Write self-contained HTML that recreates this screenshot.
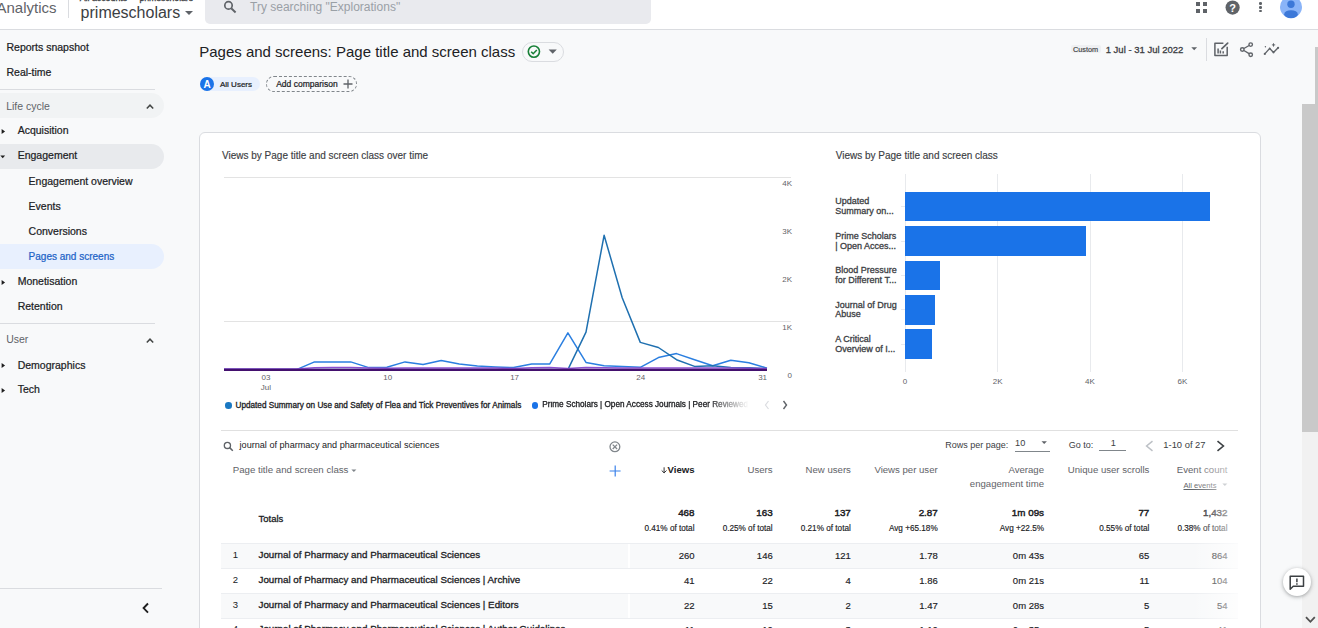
<!DOCTYPE html>
<html><head><meta charset="utf-8"><style>
html,body{margin:0;padding:0;width:1318px;height:628px;overflow:hidden;background:#f8f9fa;position:relative;font-family:"Liberation Sans", sans-serif;}
.t{position:absolute;line-height:1;white-space:nowrap;}
.r{position:absolute;box-sizing:border-box;}
.nav{-webkit-text-stroke-width:0.22px;}
.med{-webkit-text-stroke-width:0.3px;}
.lt{-webkit-text-stroke-width:0.15px;}
.sb{-webkit-text-stroke-width:0.45px;}
svg.r{overflow:visible;}
</style></head><body>
<div class="r" style="left:0.00px;top:0.00px;width:1318.00px;height:29.00px;background:#ffffff;"></div>
<div class="r" style="left:0.00px;top:29.00px;width:1318.00px;height:1.00px;background:#dadce0;"></div>
<div class="t" style="top:0.00px;font-size:15px;color:#5f6368;left:-3.50px;">Analytics</div>
<div class="r" style="left:68.00px;top:0.00px;width:1.00px;height:17.50px;background:#dadce0;"></div>
<div class="t med" style="top:-5.95px;font-size:8.8px;color:#3c4043;left:79.70px;">All accounts</div>
<div class="t med" style="top:-5.78px;font-size:8.6px;color:#3c4043;left:139.50px;">primescholars</div>
<div class="t" style="top:4.56px;font-size:16px;color:#3c4043;left:80.60px;">primescholars</div>
<svg class="r" style="left:184px;top:10px" width="10" height="6"><path d="M1 1h8l-4 4z" fill="#5f6368"/></svg>
<div class="r" style="left:205.00px;top:-8.00px;width:446.00px;height:31.70px;background:#e9eaee;border-radius:5px;"></div>
<svg class="r" style="left:222px;top:0px" width="16" height="14" viewBox="0 0 16 14"><circle cx="6.5" cy="5.4" r="3.7" fill="none" stroke="#5f6368" stroke-width="1.7"/><path d="M9.2 8.2l4.4 4.3" stroke="#5f6368" stroke-width="1.9"/></svg>
<div class="t" style="top:0.94px;font-size:12px;color:#9aa0a6;left:250.00px;">Try searching &quot;Explorations&quot;</div>
<div class="r" style="left:1196.00px;top:2.20px;width:4.20px;height:4.20px;background:#5f6368;"></div>
<div class="r" style="left:1196.00px;top:9.20px;width:4.20px;height:4.20px;background:#5f6368;"></div>
<div class="r" style="left:1202.80px;top:2.20px;width:4.20px;height:4.20px;background:#5f6368;"></div>
<div class="r" style="left:1202.80px;top:9.20px;width:4.20px;height:4.20px;background:#5f6368;"></div>
<svg class="r" style="left:1225px;top:0px" width="16" height="16" viewBox="0 0 16 16"><circle cx="7.6" cy="7.6" r="7.1" fill="#5f6368"/><text x="7.6" y="11.8" font-size="11" font-weight="bold" fill="#fff" text-anchor="middle" font-family="Liberation Sans">?</text></svg>
<div class="r" style="left:1259.3px;top:2.40px;width:2.6px;height:2.6px;border-radius:50%;background:#5f6368"></div>
<div class="r" style="left:1259.3px;top:6.00px;width:2.6px;height:2.6px;border-radius:50%;background:#5f6368"></div>
<div class="r" style="left:1259.3px;top:9.70px;width:2.6px;height:2.6px;border-radius:50%;background:#5f6368"></div>
<svg class="r" style="left:1280px;top:-4px" width="22" height="22" viewBox="0 0 22 22"><circle cx="11" cy="11" r="11" fill="#8ab4f8"/><circle cx="11" cy="8.3" r="3.7" fill="#3c78d8"/><ellipse cx="11" cy="18.2" rx="6.8" ry="4" fill="#3c78d8"/></svg>
<div class="r" style="left:0.00px;top:30.00px;width:199.00px;height:598.00px;background:#f8f9fa;"></div>
<div class="t nav" style="top:42.41px;font-size:10.5px;color:#202124;left:6.50px;">Reports snapshot</div>
<div class="t nav" style="top:67.21px;font-size:10.5px;color:#202124;left:6.50px;">Real-time</div>
<div class="r" style="left:0.00px;top:89.00px;width:155.00px;height:1.00px;background:#dadce0;"></div>
<div class="r" style="left:-20.00px;top:93.00px;width:184.00px;height:25.00px;background:#f1f3f4;border-radius:0 12.5px 12.5px 0;"></div>
<div class="t" style="top:100.51px;font-size:10.5px;color:#5f6368;left:6.20px;">Life cycle</div>
<svg class="r" style="left:144.5px;top:102.7px" width="10" height="7" viewBox="0 0 10 7"><path d="M1.8 5.5L5 2.2l3.2 3.3" fill="none" stroke="#444746" stroke-width="1.5"/></svg>
<svg class="r" style="left:0.5px;top:128.3px" width="6" height="7" viewBox="0 0 6 7"><path d="M0.6 0.9v5.2l3.5-2.6z" fill="#1f1f1f"/></svg>
<div class="t nav" style="top:125.41px;font-size:10.5px;color:#202124;left:17.70px;">Acquisition</div>
<div class="r" style="left:-20.00px;top:144.00px;width:184.00px;height:25.00px;background:#e8eaed;border-radius:0 12.5px 12.5px 0;"></div>
<svg class="r" style="left:-0.6px;top:154.6px" width="8" height="5" viewBox="0 0 8 5"><path d="M1.3 0.6h4.8l-2.4 2.7z" fill="#1f1f1f"/></svg>
<div class="t nav" style="top:150.31px;font-size:10.5px;color:#202124;left:17.70px;">Engagement</div>
<div class="t nav" style="top:175.71px;font-size:10.5px;color:#202124;left:28.60px;">Engagement overview</div>
<div class="t nav" style="top:200.61px;font-size:10.5px;color:#202124;left:28.60px;">Events</div>
<div class="t nav" style="top:226.41px;font-size:10.5px;color:#202124;left:28.60px;">Conversions</div>
<div class="r" style="left:-20.00px;top:244.00px;width:184.00px;height:25.00px;background:#e8f0fe;border-radius:0 12.5px 12.5px 0;"></div>
<div class="t nav" style="top:251.53px;font-size:10px;color:#1b62c6;left:28.60px;">Pages and screens</div>
<svg class="r" style="left:0.5px;top:279.2px" width="6" height="7" viewBox="0 0 6 7"><path d="M0.6 0.9v5.2l3.5-2.6z" fill="#1f1f1f"/></svg>
<div class="t nav" style="top:276.31px;font-size:10.5px;color:#202124;left:17.70px;">Monetisation</div>
<div class="t nav" style="top:301.41px;font-size:10.5px;color:#202124;left:17.70px;">Retention</div>
<div class="r" style="left:0.00px;top:323.00px;width:155.00px;height:1.00px;background:#dadce0;"></div>
<div class="t" style="top:334.31px;font-size:10.5px;color:#5f6368;left:6.20px;">User</div>
<svg class="r" style="left:144.5px;top:336.5px" width="10" height="7" viewBox="0 0 10 7"><path d="M1.8 5.5L5 2.2l3.2 3.3" fill="none" stroke="#444746" stroke-width="1.5"/></svg>
<svg class="r" style="left:0.5px;top:362.4px" width="6" height="7" viewBox="0 0 6 7"><path d="M0.6 0.9v5.2l3.5-2.6z" fill="#1f1f1f"/></svg>
<div class="t nav" style="top:359.51px;font-size:10.5px;color:#202124;left:17.70px;">Demographics</div>
<svg class="r" style="left:0.5px;top:386.9px" width="6" height="7" viewBox="0 0 6 7"><path d="M0.6 0.9v5.2l3.5-2.6z" fill="#1f1f1f"/></svg>
<div class="t nav" style="top:384.01px;font-size:10.5px;color:#202124;left:17.70px;">Tech</div>
<div class="r" style="left:0.00px;top:588.00px;width:162.00px;height:1.00px;background:#dadce0;"></div>
<svg class="r" style="left:141px;top:601.5px" width="9" height="12" viewBox="0 0 9 12"><path d="M7 1.5L2.6 6.1 7 10.6" fill="none" stroke="#1f1f1f" stroke-width="1.9"/></svg>
<div class="r" style="left:199.00px;top:30.00px;width:1103.00px;height:598.00px;background:#f8f9fa;"></div>
<div class="t" style="top:44.30px;font-size:15px;color:#202124;left:199.20px;">Pages and screens: Page title and screen class</div>
<div class="r" style="left:522px;top:41.8px;width:41.6px;height:20px;border:1px solid #dadce0;border-radius:10px;"></div>
<svg class="r" style="left:527px;top:44.8px" width="14" height="14" viewBox="0 0 14 14"><circle cx="6.9" cy="6.6" r="5.6" fill="none" stroke="#188038" stroke-width="1.6"/><path d="M4.2 6.7l2 2 3.6-3.7" fill="none" stroke="#188038" stroke-width="1.6"/></svg>
<svg class="r" style="left:547.5px;top:49.3px" width="10" height="6" viewBox="0 0 10 6"><path d="M0.6 0.4h8.2l-4.1 4.4z" fill="#5f6368"/></svg>
<div class="r" style="left:200.00px;top:77.00px;width:60.20px;height:14.20px;background:#e8f0fe;border-radius:7.1px;"></div>
<div class="r" style="left:200px;top:77px;width:14.2px;height:14.2px;border-radius:50%;background:#1a73e8;"></div>
<div class="t" style="top:79.94px;font-size:10px;color:#ffffff;font-weight:bold;left:7.10px;width:400px;text-align:center;">A</div>
<div class="t nav" style="top:80.73px;font-size:8px;color:#202124;left:220.00px;">All Users</div>
<div class="r" style="left:266.3px;top:76px;width:91.2px;height:16px;border:1px dashed #80868b;border-radius:8px;"></div>
<div class="t nav" style="top:79.80px;font-size:8.5px;color:#202124;left:276.20px;">Add comparison</div>
<svg class="r" style="left:342.5px;top:78.8px" width="10" height="10" viewBox="0 0 10 10"><path d="M5 0.5v9M0.5 5h9" stroke="#5f6368" stroke-width="1.3"/></svg>
<div class="r" style="left:1071.30px;top:44.60px;width:29.70px;height:8.70px;background:#eff0f2;border-radius:2px;"></div>
<div class="t lt" style="top:46.32px;font-size:7.3px;color:#3c4043;left:1073.00px;">Custom</div>
<div class="t med" style="top:45.46px;font-size:9.5px;color:#3c4043;left:1105.70px;">1 Jul - 31 Jul 2022</div>
<svg class="r" style="left:1190.5px;top:47px" width="7" height="4" viewBox="0 0 7 4"><path d="M0.3 0.2h5.8l-2.9 3z" fill="#5f6368"/></svg>
<div class="r" style="left:1205.50px;top:37.60px;width:1.00px;height:23.60px;background:#dadce0;"></div>
<svg class="r" style="left:1208px;top:38px" width="76" height="22" viewBox="0 0 76 22"><path d="M15.4 5.2H6.9v12.4h12.3V8.8" fill="none" stroke="#5f6368" stroke-width="1.5" stroke-linejoin="round"/><path d="M13.9 10.6l5.8-5.5" stroke="#5f6368" stroke-width="1.7" stroke-linecap="round"/><path d="M10.1 10.4v5.1M12.4 12.4v3.1M15.2 13.3v2.2" stroke="#5f6368" stroke-width="1.5"/><circle cx="42.7" cy="6.6" r="1.75" fill="none" stroke="#5f6368" stroke-width="1.4"/><circle cx="34.3" cy="11.5" r="1.75" fill="none" stroke="#5f6368" stroke-width="1.4"/><circle cx="42.7" cy="16.7" r="1.75" fill="none" stroke="#5f6368" stroke-width="1.4"/><path d="M35.9 10.5l5.2-3M35.9 12.5l5.2 3.2" stroke="#5f6368" stroke-width="1.4"/><path d="M56.8 15.9l4.9-5.5 3.8 4 4.6-4.6" fill="none" stroke="#5f6368" stroke-width="1.4" stroke-linejoin="round"/><circle cx="56.8" cy="15.9" r="1.1" fill="#5f6368"/><circle cx="61.7" cy="10.4" r="0.9" fill="#5f6368"/><circle cx="65.5" cy="14.4" r="0.9" fill="#5f6368"/><circle cx="70.1" cy="9.8" r="1.1" fill="#5f6368"/><path d="M65.5 5.3v3.3M63.9 6.9h3.3" stroke="#5f6368" stroke-width="1"/><circle cx="57.4" cy="8.7" r="0.7" fill="#5f6368"/></svg>
<div class="r" style="left:199px;top:132px;width:1062px;height:520px;background:#fff;border:1px solid #dadce0;border-radius:6px;"></div>
<div class="t lt" style="top:150.94px;font-size:10px;color:#3c4043;left:222.00px;">Views by Page title and screen class over time</div>
<div class="r" style="left:223.80px;top:177.00px;width:567.50px;height:1.00px;background:#e3e3e3;"></div>
<div class="r" style="left:223.80px;top:321.00px;width:567.50px;height:1.00px;background:#e3e3e3;"></div>
<div class="t" style="top:179.53px;font-size:8px;color:#5f6368;right:526.00px;text-align:right;">4K</div>
<div class="t" style="top:227.53px;font-size:8px;color:#5f6368;right:526.00px;text-align:right;">3K</div>
<div class="t" style="top:275.53px;font-size:8px;color:#5f6368;right:526.00px;text-align:right;">2K</div>
<div class="t" style="top:323.53px;font-size:8px;color:#5f6368;right:526.00px;text-align:right;">1K</div>
<div class="t" style="top:372.23px;font-size:8px;color:#5f6368;right:526.00px;text-align:right;">0</div>
<div class="t" style="top:374.43px;font-size:8px;color:#5f6368;left:65.90px;width:400px;text-align:center;">03</div>
<div class="t" style="top:374.43px;font-size:8px;color:#5f6368;left:187.70px;width:400px;text-align:center;">10</div>
<div class="t" style="top:374.43px;font-size:8px;color:#5f6368;left:314.60px;width:400px;text-align:center;">17</div>
<div class="t" style="top:374.43px;font-size:8px;color:#5f6368;left:440.80px;width:400px;text-align:center;">24</div>
<div class="t" style="top:374.43px;font-size:8px;color:#5f6368;left:562.60px;width:400px;text-align:center;">31</div>
<div class="t" style="top:383.53px;font-size:8px;color:#5f6368;left:65.90px;width:400px;text-align:center;">Jul</div>
<svg class="r" style="left:0;top:0" width="1318" height="628"><polyline points="224.0,369.6 242.1,369.6 260.2,369.6 278.3,369.6 296.4,369.6 314.5,361.9 332.6,361.9 350.7,361.9 368.8,367.6 386.9,367.2 405.0,361.9 423.1,364.4 441.2,360.6 459.3,364.0 477.4,366.1 495.5,367.0 513.6,367.6 531.7,363.9 549.8,363.9 567.9,332.8 586.0,362.4 604.1,365.7 622.2,366.6 640.3,367.3 658.4,357.6 676.5,353.6 694.6,359.7 712.7,365.8 730.8,360.2 748.9,362.7 767.0,368.1" fill="none" stroke="#2b7fe0" stroke-width="1.5" stroke-linejoin="round"/><polyline points="224.0,369.6 242.1,369.6 260.2,369.6 278.3,369.6 296.4,369.6 314.5,369.6 332.6,369.6 350.7,369.6 368.8,369.6 386.9,369.6 405.0,369.6 423.1,369.6 441.2,369.6 459.3,369.6 477.4,369.6 495.5,369.6 513.6,369.6 531.7,369.6 549.8,369.6 567.9,369.6 586.0,332.2 604.1,235.3 622.2,297.7 640.3,342.4 658.4,347.5 676.5,359.7 694.6,366.4 712.7,365.8 730.8,367.6 748.9,367.8 767.0,368.6" fill="none" stroke="#1f70b0" stroke-width="1.5" stroke-linejoin="round"/><polyline points="224.0,369.0 242.1,369.0 260.2,369.0 278.3,369.0 296.4,369.0 314.5,367.8 332.6,367.5 350.7,367.5 368.8,368.0 386.9,368.3 405.0,368.0 423.1,368.0 441.2,368.0 459.3,368.0 477.4,368.0 495.5,368.0 513.6,368.5 531.7,367.8 549.8,367.5 567.9,368.6 586.0,367.5 604.1,367.8 622.2,368.0 640.3,368.0 658.4,368.0 676.5,368.0 694.6,368.0 712.7,368.0 730.8,368.0 748.9,368.3 767.0,368.5" fill="none" stroke="#8a4fd0" stroke-width="1.5"/><polyline points="224.0,369.9 242.1,369.9 260.2,369.9 278.3,369.9 296.4,369.9 314.5,369.9 332.6,369.9 350.7,369.9 368.8,369.9 386.9,369.9 405.0,369.9 423.1,369.9 441.2,369.9 459.3,369.9 477.4,369.9 495.5,369.9 513.6,369.9 531.7,369.9 549.8,369.9 567.9,369.9 586.0,369.9 604.1,369.9 622.2,369.9 640.3,369.9 658.4,369.9 676.5,369.9 694.6,369.9 712.7,369.9 730.8,369.9 748.9,369.9 767.0,369.9" fill="none" stroke="#43106e" stroke-width="2.1"/></svg>
<div class="r" style="left:225px;top:402.3px;width:6.6px;height:6.6px;border-radius:50%;background:#1a78c2;"></div>
<div class="t med" style="top:401.86px;font-size:8.2px;color:#202124;left:235.50px;">Updated Summary on Use and Safety of Flea and Tick Preventives for Animals</div>
<div class="r" style="left:531.9px;top:402.3px;width:6.6px;height:6.6px;border-radius:50%;background:#1a73e8;"></div>
<div class="t" style="left:542.3px;top:401.36px;font-size:8.2px;color:#202124;width:207px;-webkit-text-stroke-width:0.3px;overflow:hidden;-webkit-mask-image:linear-gradient(90deg,#000 80%,transparent);">Prime Scholars | Open Access Journals | Peer Reviewed</div>
<svg class="r" style="left:764px;top:400px" width="24" height="10" viewBox="0 0 24 10"><path d="M4.5 1L1.5 5l3 4" fill="none" stroke="#dadce0" stroke-width="1.2"/><path d="M19.5 1l3 4-3 4" fill="none" stroke="#5f6368" stroke-width="1.4"/></svg>
<div class="t lt" style="top:150.63px;font-size:10px;color:#3c4043;left:835.70px;">Views by Page title and screen class</div>
<div class="r" style="left:904.50px;top:174.00px;width:1.00px;height:198.00px;background:#e8eaed;"></div>
<div class="r" style="left:997.10px;top:174.00px;width:1.00px;height:198.00px;background:#e8eaed;"></div>
<div class="r" style="left:1089.50px;top:174.00px;width:1.00px;height:198.00px;background:#e8eaed;"></div>
<div class="r" style="left:1182.00px;top:174.00px;width:1.00px;height:198.00px;background:#e8eaed;"></div>
<div class="t" style="top:377.93px;font-size:8px;color:#5f6368;left:705.00px;width:400px;text-align:center;">0</div>
<div class="t" style="top:377.93px;font-size:8px;color:#5f6368;left:797.60px;width:400px;text-align:center;">2K</div>
<div class="t" style="top:377.93px;font-size:8px;color:#5f6368;left:890.00px;width:400px;text-align:center;">4K</div>
<div class="t" style="top:377.93px;font-size:8px;color:#5f6368;left:982.50px;width:400px;text-align:center;">6K</div>
<div class="r" style="left:905.00px;top:191.70px;width:304.90px;height:29.70px;background:#1a73e8;"></div>
<div class="r" style="left:901.30px;top:206.20px;width:3.50px;height:1.00px;background:#e8eaed;"></div>
<div class="t med" style="top:197.38px;font-size:9px;color:#3c4043;left:835.20px;">Updated</div>
<div class="t med" style="top:207.28px;font-size:9px;color:#3c4043;left:835.20px;">Summary on...</div>
<div class="r" style="left:905.00px;top:226.10px;width:180.70px;height:29.70px;background:#1a73e8;"></div>
<div class="r" style="left:901.30px;top:240.60px;width:3.50px;height:1.00px;background:#e8eaed;"></div>
<div class="t med" style="top:231.78px;font-size:9px;color:#3c4043;left:835.20px;">Prime Scholars</div>
<div class="t med" style="top:241.68px;font-size:9px;color:#3c4043;left:835.20px;">| Open Acces...</div>
<div class="r" style="left:905.00px;top:260.50px;width:35.00px;height:29.70px;background:#1a73e8;"></div>
<div class="r" style="left:901.30px;top:275.00px;width:3.50px;height:1.00px;background:#e8eaed;"></div>
<div class="t med" style="top:266.18px;font-size:9px;color:#3c4043;left:835.20px;">Blood Pressure</div>
<div class="t med" style="top:276.08px;font-size:9px;color:#3c4043;left:835.20px;">for Different T...</div>
<div class="r" style="left:905.00px;top:294.90px;width:29.70px;height:29.70px;background:#1a73e8;"></div>
<div class="r" style="left:901.30px;top:309.40px;width:3.50px;height:1.00px;background:#e8eaed;"></div>
<div class="t med" style="top:300.58px;font-size:9px;color:#3c4043;left:835.20px;">Journal of Drug</div>
<div class="t med" style="top:310.48px;font-size:9px;color:#3c4043;left:835.20px;">Abuse</div>
<div class="r" style="left:905.00px;top:329.30px;width:26.80px;height:29.70px;background:#1a73e8;"></div>
<div class="r" style="left:901.30px;top:343.80px;width:3.50px;height:1.00px;background:#e8eaed;"></div>
<div class="t med" style="top:334.98px;font-size:9px;color:#3c4043;left:835.20px;">A Critical</div>
<div class="t med" style="top:344.88px;font-size:9px;color:#3c4043;left:835.20px;">Overview of I...</div>
<div class="r" style="left:221.00px;top:430.00px;width:1017.00px;height:1.00px;background:#e0e0e0;"></div>
<svg class="r" style="left:222.5px;top:441px" width="11" height="11" viewBox="0 0 11 11"><circle cx="4.4" cy="4.4" r="3.1" fill="none" stroke="#5f6368" stroke-width="1.3"/><path d="M6.6 6.6l3.2 3.2" stroke="#5f6368" stroke-width="1.5"/></svg>
<div class="t" style="top:441.00px;font-size:9.1px;color:#202124;left:239.60px;">journal of pharmacy and pharmaceutical sciences</div>
<svg class="r" style="left:609px;top:441px" width="12" height="12" viewBox="0 0 12 12"><circle cx="5.9" cy="5.8" r="4.9" fill="none" stroke="#80868b" stroke-width="1.3"/><path d="M3.7 3.6l4.4 4.4M8.1 3.6l-4.4 4.4" stroke="#80868b" stroke-width="1.3"/></svg>
<div class="t" style="top:465.09px;font-size:9.7px;color:#5f6368;left:232.70px;">Page title and screen class</div>
<svg class="r" style="left:351px;top:468.5px" width="6" height="4" viewBox="0 0 6 4"><path d="M0.4 0.5h5l-2.5 2.6z" fill="#80868b"/></svg>
<svg class="r" style="left:609px;top:464.5px" width="12" height="12" viewBox="0 0 12 12"><path d="M6.2 0.5v11M0.6 6h11" stroke="#3b82ea" stroke-width="1.2"/></svg>
<svg class="r" style="left:660.8px;top:466.5px" width="7" height="7" viewBox="0 0 7 7"><path d="M3.1 0.3v5.6M0.7 3.5l2.4 2.4 2.4-2.4" fill="none" stroke="#202124" stroke-width="0.9"/></svg>
<div class="t" style="top:464.87px;font-size:9.6px;color:#202124;font-weight:bold;right:623.40px;text-align:right;">Views</div>
<div class="t" style="top:465.17px;font-size:9.6px;color:#5f6368;right:545.40px;text-align:right;">Users</div>
<div class="t" style="top:465.17px;font-size:9.6px;color:#5f6368;right:467.10px;text-align:right;">New users</div>
<div class="t" style="top:465.17px;font-size:9.6px;color:#5f6368;right:380.30px;text-align:right;">Views per user</div>
<div class="t" style="top:465.17px;font-size:9.6px;color:#5f6368;right:274.00px;text-align:right;">Average</div>
<div class="t" style="top:479.47px;font-size:9.6px;color:#5f6368;right:274.00px;text-align:right;">engagement time</div>
<div class="t" style="top:465.17px;font-size:9.6px;color:#5f6368;right:168.60px;text-align:right;">Unique user scrolls</div>
<div class="t" style="top:465.17px;font-size:9.6px;color:#5f6368;right:90.50px;text-align:right;">Event count</div>
<div class="t" style="left:1183.5px;top:481.6px;font-size:7.6px;color:#5f6368;text-decoration:underline;">All events</div>
<svg class="r" style="left:1222px;top:483px" width="6" height="4" viewBox="0 0 6 4"><path d="M0.4 0.5h5l-2.5 2.6z" fill="#9aa0a6"/></svg>
<div class="t" style="top:441.08px;font-size:9px;color:#3c4043;left:945.30px;">Rows per page:</div>
<div class="t" style="top:439.01px;font-size:9.2px;color:#3c4043;left:1015.10px;">10</div>
<div class="r" style="left:1015.00px;top:451.20px;width:35.00px;height:1.00px;background:#80868b;"></div>
<svg class="r" style="left:1040.5px;top:440.7px" width="7" height="4" viewBox="0 0 7 4"><path d="M0.5 0.3h5.4l-2.7 2.8z" fill="#5f6368"/></svg>
<div class="t" style="top:441.08px;font-size:9px;color:#3c4043;left:1068.80px;">Go to:</div>
<div class="t" style="top:439.01px;font-size:9.2px;color:#3c4043;left:913.20px;width:400px;text-align:center;">1</div>
<div class="r" style="left:1099.00px;top:450.30px;width:27.40px;height:1.00px;background:#80868b;"></div>
<svg class="r" style="left:1144px;top:439.5px" width="10" height="12" viewBox="0 0 10 12"><path d="M8.5 1.2L2.6 6l5.9 4.8" fill="none" stroke="#bdc1c6" stroke-width="1.5"/></svg>
<div class="t" style="top:439.54px;font-size:9.4px;color:#3c4043;left:1163.30px;">1-10 of 27</div>
<svg class="r" style="left:1215.5px;top:439.5px" width="10" height="12" viewBox="0 0 10 12"><path d="M1.5 1.2L7.4 6l-5.9 4.8" fill="none" stroke="#3c4043" stroke-width="1.6"/></svg>
<div class="t med" style="top:514.06px;font-size:9.5px;color:#202124;left:258.50px;">Totals</div>
<div class="t sb" style="top:507.90px;font-size:9.8px;color:#202124;right:623.50px;text-align:right;">468</div>
<div class="t lt" style="top:524.76px;font-size:8.2px;color:#202124;right:623.50px;text-align:right;">0.41% of total</div>
<div class="t sb" style="top:507.90px;font-size:9.8px;color:#202124;right:545.30px;text-align:right;">163</div>
<div class="t lt" style="top:524.76px;font-size:8.2px;color:#202124;right:545.30px;text-align:right;">0.25% of total</div>
<div class="t sb" style="top:507.90px;font-size:9.8px;color:#202124;right:467.20px;text-align:right;">137</div>
<div class="t lt" style="top:524.76px;font-size:8.2px;color:#202124;right:467.20px;text-align:right;">0.21% of total</div>
<div class="t sb" style="top:507.90px;font-size:9.8px;color:#202124;right:380.30px;text-align:right;">2.87</div>
<div class="t lt" style="top:524.76px;font-size:8.2px;color:#202124;right:380.30px;text-align:right;">Avg +65.18%</div>
<div class="t sb" style="top:507.90px;font-size:9.8px;color:#202124;right:274.00px;text-align:right;">1m 09s</div>
<div class="t lt" style="top:524.76px;font-size:8.2px;color:#202124;right:274.00px;text-align:right;">Avg +22.5%</div>
<div class="t sb" style="top:507.90px;font-size:9.8px;color:#202124;right:168.70px;text-align:right;">77</div>
<div class="t lt" style="top:524.76px;font-size:8.2px;color:#202124;right:168.70px;text-align:right;">0.55% of total</div>
<div class="t sb" style="top:507.90px;font-size:9.8px;color:#202124;right:90.50px;text-align:right;">1,432</div>
<div class="t lt" style="top:524.76px;font-size:8.2px;color:#202124;right:90.50px;text-align:right;">0.38% of total</div>
<div class="r" style="left:221.00px;top:542.80px;width:406.50px;height:25.20px;background:#f8f9fa;"></div>
<div class="r" style="left:629.50px;top:542.80px;width:608.50px;height:25.20px;background:#f8f9fa;"></div>
<div class="r" style="left:221.00px;top:542.80px;width:1017.00px;height:1.00px;background:#eceef1;"></div>
<div class="t" style="top:550.06px;font-size:9.5px;color:#202124;left:232.80px;">1</div>
<div class="t med" style="top:549.80px;font-size:9.8px;color:#202124;left:258.50px;">Journal of Pharmacy and Pharmaceutical Sciences</div>
<div class="t lt" style="top:550.86px;font-size:9.5px;color:#202124;right:623.50px;text-align:right;">260</div>
<div class="t lt" style="top:550.86px;font-size:9.5px;color:#202124;right:545.30px;text-align:right;">146</div>
<div class="t lt" style="top:550.86px;font-size:9.5px;color:#202124;right:467.20px;text-align:right;">121</div>
<div class="t lt" style="top:550.86px;font-size:9.5px;color:#202124;right:380.30px;text-align:right;">1.78</div>
<div class="t lt" style="top:550.86px;font-size:9.5px;color:#202124;right:274.00px;text-align:right;">0m 43s</div>
<div class="t lt" style="top:550.86px;font-size:9.5px;color:#202124;right:168.70px;text-align:right;">65</div>
<div class="t lt" style="top:550.86px;font-size:9.5px;color:#202124;right:90.50px;text-align:right;">864</div>
<div class="r" style="left:221.00px;top:567.90px;width:1017.00px;height:1.00px;background:#eceef1;"></div>
<div class="t" style="top:575.16px;font-size:9.5px;color:#202124;left:232.80px;">2</div>
<div class="t med" style="top:574.90px;font-size:9.8px;color:#202124;left:258.50px;">Journal of Pharmacy and Pharmaceutical Sciences | Archive</div>
<div class="t lt" style="top:575.96px;font-size:9.5px;color:#202124;right:623.50px;text-align:right;">41</div>
<div class="t lt" style="top:575.96px;font-size:9.5px;color:#202124;right:545.30px;text-align:right;">22</div>
<div class="t lt" style="top:575.96px;font-size:9.5px;color:#202124;right:467.20px;text-align:right;">4</div>
<div class="t lt" style="top:575.96px;font-size:9.5px;color:#202124;right:380.30px;text-align:right;">1.86</div>
<div class="t lt" style="top:575.96px;font-size:9.5px;color:#202124;right:274.00px;text-align:right;">0m 21s</div>
<div class="t lt" style="top:575.96px;font-size:9.5px;color:#202124;right:168.70px;text-align:right;">11</div>
<div class="t lt" style="top:575.96px;font-size:9.5px;color:#202124;right:90.50px;text-align:right;">104</div>
<div class="r" style="left:221.00px;top:593.00px;width:406.50px;height:25.20px;background:#f8f9fa;"></div>
<div class="r" style="left:629.50px;top:593.00px;width:608.50px;height:25.20px;background:#f8f9fa;"></div>
<div class="r" style="left:221.00px;top:593.00px;width:1017.00px;height:1.00px;background:#eceef1;"></div>
<div class="t" style="top:600.26px;font-size:9.5px;color:#202124;left:232.80px;">3</div>
<div class="t med" style="top:600.00px;font-size:9.8px;color:#202124;left:258.50px;">Journal of Pharmacy and Pharmaceutical Sciences | Editors</div>
<div class="t lt" style="top:601.06px;font-size:9.5px;color:#202124;right:623.50px;text-align:right;">22</div>
<div class="t lt" style="top:601.06px;font-size:9.5px;color:#202124;right:545.30px;text-align:right;">15</div>
<div class="t lt" style="top:601.06px;font-size:9.5px;color:#202124;right:467.20px;text-align:right;">2</div>
<div class="t lt" style="top:601.06px;font-size:9.5px;color:#202124;right:380.30px;text-align:right;">1.47</div>
<div class="t lt" style="top:601.06px;font-size:9.5px;color:#202124;right:274.00px;text-align:right;">0m 28s</div>
<div class="t lt" style="top:601.06px;font-size:9.5px;color:#202124;right:168.70px;text-align:right;">5</div>
<div class="t lt" style="top:601.06px;font-size:9.5px;color:#202124;right:90.50px;text-align:right;">54</div>
<div class="r" style="left:221.00px;top:618.10px;width:1017.00px;height:1.00px;background:#eceef1;"></div>
<div class="t" style="top:624.16px;font-size:9.5px;color:#202124;left:232.80px;">4</div>
<div class="t med" style="top:623.90px;font-size:9.8px;color:#202124;left:258.50px;">Journal of Pharmacy and Pharmaceutical Sciences | Author Guidelines</div>
<div class="t lt" style="top:624.96px;font-size:9.5px;color:#202124;right:623.50px;text-align:right;">11</div>
<div class="t lt" style="top:624.96px;font-size:9.5px;color:#202124;right:545.30px;text-align:right;">10</div>
<div class="t lt" style="top:624.96px;font-size:9.5px;color:#202124;right:467.20px;text-align:right;">3</div>
<div class="t lt" style="top:624.96px;font-size:9.5px;color:#202124;right:380.30px;text-align:right;">1.10</div>
<div class="t lt" style="top:624.96px;font-size:9.5px;color:#202124;right:274.00px;text-align:right;">0m 35s</div>
<div class="t lt" style="top:624.96px;font-size:9.5px;color:#202124;right:168.70px;text-align:right;">5</div>
<div class="t lt" style="top:624.96px;font-size:9.5px;color:#202124;right:90.50px;text-align:right;">41</div>
<div class="r" style="left:1192.00px;top:455.00px;width:50.00px;height:180.00px;background:linear-gradient(90deg,rgba(255,255,255,0),rgba(255,255,255,0.8));"></div>
<div class="r" style="left:1302.00px;top:30.00px;width:16.00px;height:598.00px;background:#f8f9fa;"></div>
<div class="r" style="left:1315.00px;top:47.00px;width:3.00px;height:57.00px;background:#c9c9c9;"></div>
<div class="r" style="left:1302.00px;top:104.00px;width:16.00px;height:328.00px;background:#c9c9c9;"></div>
<div class="r" style="left:1302.00px;top:432.00px;width:16.00px;height:196.00px;background:#f1f1f1;"></div>
<svg class="r" style="left:1305px;top:616px" width="11" height="8" viewBox="0 0 11 8"><path d="M1 1.2l4.4 4.6 4.4-4.6" fill="none" stroke="#505050" stroke-width="1.8"/></svg>
<div class="r" style="left:1283px;top:568px;width:28px;height:28px;border-radius:50%;background:#fff;box-shadow:0 1px 3px rgba(60,64,67,.3),0 1px 4px 1px rgba(60,64,67,.15);"></div>
<svg class="r" style="left:1289px;top:575px" width="16" height="16" viewBox="0 0 16 16"><path d="M1.2 14.2V1.3h13.3v10H4.2z" fill="none" stroke="#3c4043" stroke-width="1.5" stroke-linejoin="round"/><path d="M7.9 3.6v3.6M7.9 8.3v1.4" stroke="#3c4043" stroke-width="1.5"/></svg>
</body></html>
